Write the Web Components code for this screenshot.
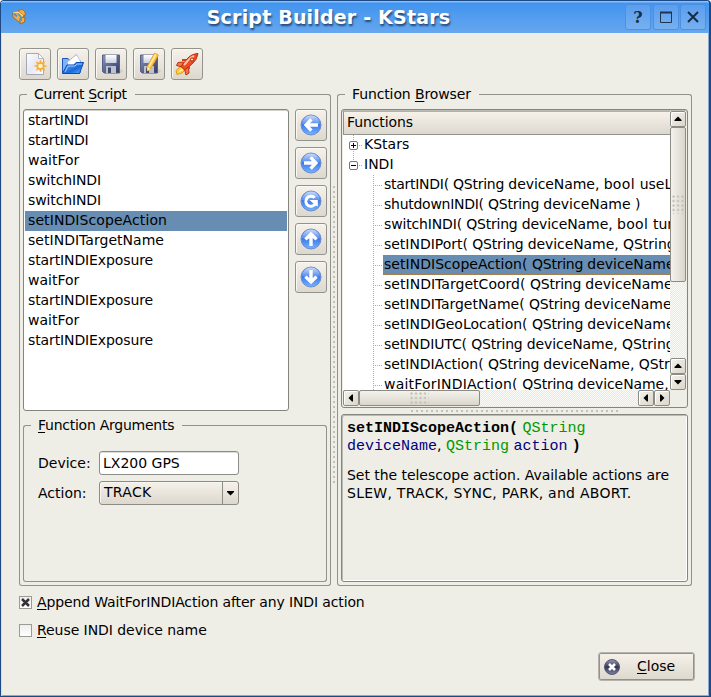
<!DOCTYPE html>
<html lang="en">
<head>
<meta charset="utf-8">
<title>Script Builder - KStars</title>
<style>
html,body{margin:0;width:711px;height:697px;overflow:hidden;background:#fff}
body{font:14px/20px "DejaVu Sans",sans-serif;color:#000}
u{text-decoration:underline;text-underline-offset:2px;text-decoration-thickness:1px}
.cols{display:flex;height:502px}
.tools{display:flex;gap:6px;padding:15px 0 0 17px;height:36px}
.left{margin-left:17px}
.top{display:flex;gap:6px;height:302px}
.arrows{display:flex;flex-direction:column;gap:6px}
.form{display:grid;grid-template-columns:61px 140px;row-gap:6px;padding:16px 0 0 14px;line-height:24px}
.checks{padding:6px 0 0 17px;height:60px}
.foot{display:flex;justify-content:flex-end;padding-right:14px}
</style>
</head>
<body>
<app-window caption="Script Builder - KStars">
  <div class="tools">
    <icon-button icon="new"></icon-button><icon-button icon="open"></icon-button><icon-button icon="save"></icon-button><icon-button icon="saveas"></icon-button><icon-button icon="run"></icon-button>
  </div>
  <div class="cols">
    <group-box class="left" style="width:312px;height:502px;--pad:3px;--top:5px"><span slot="legend" style="letter-spacing:-.35px">Current <u>S</u>cript</span>
      <div class="top">
        <script-list items="startINDI,startINDI,waitFor,switchINDI,switchINDI,setINDIScopeAction,setINDITargetName,startINDIExposure,waitFor,startINDIExposure,waitFor,startINDIExposure" selected="5"></script-list>
        <div class="arrows">
          <icon-button icon="left"></icon-button><icon-button icon="right"></icon-button><icon-button icon="copy"></icon-button><icon-button icon="up"></icon-button><icon-button icon="down"></icon-button>
        </div>
      </div>
      <group-box style="width:304px;height:167px;margin-top:4px;--pad:0px;--top:0px"><span slot="legend" style="letter-spacing:-.25px"><u>F</u>unction Arguments</span>
        <div class="form">
          <span>Device:</span><text-field value="LX200 GPS"></text-field>
          <span>Action:</span><combo-box value="TRACK"></combo-box>
        </div>
      </group-box>
    </group-box>
    <dot-splitter style="width:6px;padding:101px 0 0 1px;--h:300px;--w:5px"></dot-splitter>
    <group-box style="width:355px;height:502px;--pad:3px;--top:5px"><span slot="legend" style="letter-spacing:-.12px">Function <u>B</u>rowser</span>
      <function-tree></function-tree>
      <dot-splitter style="height:6px;padding:1px 0 0 69px;--h:5px;--w:210px"></dot-splitter>
      <doc-view></doc-view>
    </group-box>
  </div>
  <div class="checks">
    <check-box checked style="letter-spacing:-.13px"><u>A</u>ppend WaitForINDIAction after any INDI action</check-box>
    <check-box style="letter-spacing:-.06px"><u>R</u>euse INDI device name</check-box>
  </div>
  <div class="foot"><close-button><u>C</u>lose</close-button></div>
</app-window>
<script>
const define=(name,html)=>customElements.define(name,class extends HTMLElement{
  connectedCallback(){
    if(this.shadowRoot)return;
    const root=this.attachShadow({mode:"open"});
    root.innerHTML="<style>*{box-sizing:border-box}:host{box-sizing:border-box}</style>"+(typeof html==="function"?html(this):html);
  }
});
/* Spreads a run of text over a given width by adjusting its letter spacing. */
const pen=document.createElement("canvas").getContext("2d");
pen.font='14px "DejaVu Sans"';
const fit=(t,w)=>w?`<span style="letter-spacing:${((w-pen.measureText(t).width)/t.length).toFixed(3)}px">${t}</span>`:t;
const FACE="linear-gradient(#f6f2ea,#dcd8ce)";
const svg=(body,s=24)=>`<svg width="${s}" height="${s}" viewBox="0 0 24 24">${body}</svg>`;
const ball=p=>`<defs><linearGradient id="b" x2="0" y2="1"><stop stop-color="#5c92ee"/><stop offset=".4" stop-color="#2f70ea"/><stop offset="1" stop-color="#78b4ff"/></linearGradient><linearGradient id="h" x2="0" y2="1"><stop stop-color="#fff" stop-opacity=".65"/><stop offset="1" stop-color="#fff" stop-opacity=".15"/></linearGradient></defs><circle cx="12" cy="12" r="10" fill="url(#b)" stroke="#6c8cc8"/><path d="M3 11a9 8.500 0 0 1 18 0Q12 13.500 3 11Z" fill="url(#h)"/>${p}`;
const arrow=r=>ball(`<path transform="rotate(${r} 12 12)" d="M4.800 12L11.200 5.300L13.600 7.500L11 10.300H19V13.700H11L13.600 16.500L11.200 18.700Z" fill="#fff"/>`);
const disk=`<defs><linearGradient id="d" x2="1" y2="1"><stop stop-color="#8993bc"/><stop offset="1" stop-color="#313960"/></linearGradient><linearGradient id="l" x2="0" y2="1"><stop stop-color="#fff"/><stop offset="1" stop-color="#c8d0e0"/></linearGradient></defs><ellipse cx="15" cy="19" rx="9" ry="3" fill="#000" opacity=".08"/><path d="M3.500 3h17v18H5l-1.500-1.500Z" fill="url(#d)" stroke="#566088"/><path d="M6.500 3h11v8h-11Z" fill="url(#l)"/><path d="M7 14h10v7H7Z" fill="#bcc1cf"/><path d="M9 15.500h3V21H9Z" fill="#414969"/>`;
const ICONS={
 new:`<defs><linearGradient id="p" x2="1" y2="1"><stop stop-color="#fff"/><stop offset=".5" stop-color="#e6e8f4"/><stop offset="1" stop-color="#fff"/></linearGradient></defs><path d="M3.500 1.500h12l5 5v16h-17Z" fill="url(#p)" stroke="#a4a6ba"/><path d="M15.500 1.500v5h5Z" fill="#fff" stroke="#b5b7c5"/><path d="M17.500 8l1.300 3 3-1.300-1.300 3 3 1.300-3 1.300 1.300 3-3-1.300-1.300 3-1.300-3-3 1.300 1.300-3-3-1.300 3-1.300-1.300-3 3 1.300Z" fill="#f6a832" stroke="#f6b452" stroke-width=".7"/><circle cx="17.500" cy="14" r="2.300" fill="#fff6c8"/>`,
 open:`<defs><linearGradient id="f" x2="1" y2="1"><stop stop-color="#72b4ff"/><stop offset=".6" stop-color="#1769dd"/><stop offset="1" stop-color="#65b4ff"/></linearGradient></defs><path d="M1.500 21V6.500H7L9 8.500H19V21Z" fill="#7ab5fa" stroke="#1c55b6"/><path d="M6 10L15.500 2.500L20.500 12L9 19Z" fill="#f3f5ff" stroke="#9ea6c8" stroke-width=".8"/><path d="M12 6L16 4L20.500 12H8Z" fill="#fff"/><path d="M1.500 21.500L6 13H13L15 10.500H22.500L18.500 21.500Z" fill="url(#f)" stroke="#0b49b7"/><path d="M4 20L7 14H14L16 12H21" fill="none" stroke="#9acaff"/>`,
 save:disk,
 saveas:disk+`<path d="M17.500 1L21.500 3L13.500 17L10.500 19L10 15Z" fill="#ffc642" stroke="#e79b24" stroke-width=".8"/><path d="M18.700 2.500L12 14.500" stroke="#fff1ae" stroke-width="1.500"/><path d="M10 15l3.500 2L10.500 19Z" fill="#ffe8bc"/>`,
 run:`<path d="M6 14L1 18.500L2 22.500L7 21L10 18Z" fill="#ffcf39" stroke="#e79820"/><path d="M7 16L3 20.500L8 18Z" fill="#fff7b0"/><path d="M8.500 10L3 10.500L1.500 13.500L7 15ZM13.500 15L14 21L11 23L9.500 17Z" fill="#f07a43" stroke="#b92e12"/><path d="M23 1.500Q16 2 12 7L6 14.500L9.500 18L16.500 12.500Q22 8 23 1.500Z" fill="#ef4c23" stroke="#b52b10"/><path d="M19 4Q15.500 5 12.500 9L9 13" stroke="#ffc4a2" stroke-width="2" fill="none"/><circle cx="17" cy="7.500" r="1.600" fill="#ffe1cb" stroke="#a92b11"/><path d="M7 8h4M14 17v-3" stroke="#d63d1b" stroke-width="1.800"/>`,
 left:arrow(0),right:arrow(180),up:arrow(90),down:arrow(-90),
 copy:ball(`<path d="M15.700 8.800A5.100 5.100 0 1 0 16.500 14.500" fill="none" stroke="#fff" stroke-width="3"/><path d="M10.500 11H18.800V17.500L16 16Z" fill="#fff"/>`)
};
define("icon-button",e=>`<style>:host{display:flex;align-items:center;justify-content:center;width:32px;height:32px;flex:none;border:1px solid #93938d;border-radius:3px;background:${FACE};box-shadow:inset 1px 1px #faf8f2}svg{display:block}</style>${svg(ICONS[e.getAttribute("icon")])}`);
define("app-window",e=>`<style>
:host{display:block;width:711px;height:697px;border:1px solid #1d4a85;border-right-width:2px;border-radius:4px 4px 0 0;background:#eeeee6;box-shadow:inset 1px 0 #d2e0f4,inset -1px -1px #8baad0}
header{display:flex;height:32px;padding:3px 3px 0 9px;background:linear-gradient(#86bdfa 0,#86bdfa 1px,#4194ee 2px,#66a7ef);border-radius:3px 3px 0 0}
h1{flex:1;margin:0 0 0 2px;text-align:center;font:bold 19px/27px "DejaVu Sans",sans-serif;color:#fff;text-shadow:1px 2px 2px #234875;letter-spacing:.19px}
.w{display:flex;gap:2px}.w span{width:26px;height:26px;border:1px solid #4c90e2;border-radius:3px;background:linear-gradient(#5b9eef,#76b0f0)}
svg{display:block}main{padding-left:1px}
</style><header><svg width="20" height="26" viewBox="0 0 20 26"><g fill="#f2b13c" stroke="#a85a17" stroke-width=".8"><path d="M2.500 9L8 7L14 11L12 19L9 18L3 13Z"/><path d="M8 7Q14 3 15.500 10L14 12ZM10 14L15 13L14.500 18L10 20Z"/></g><path d="M4 9.500l3 3M8 9l3 4M11 14v3" stroke="#578fc8" stroke-width="1.800"/><path d="M3.500 8.500L8 8l5 4" fill="none" stroke="#ffe18f" stroke-width="1.200"/></svg><h1>${e.getAttribute("caption")}</h1>
<div class="w"><span style="font:bold 16px/25px 'DejaVu Serif',serif;color:#172c44;text-align:center">?</span>
<span style="margin-right:-1px"><svg width="24" height="24"><path d="M6.500 7.500h11v10h-11Z" fill="none" stroke="#21344b"/><path d="M6 7.500h12" stroke="#21344b" stroke-width="2"/></svg></span>
<span><svg width="24" height="24"><path d="M7 7L17 17M17 7L7 17" stroke="#172c44" stroke-width="2"/></svg></span></div></header><main><slot></slot></main>`);
define("group-box",`<style>
:host{display:flex;flex-direction:column;flex:none}
.t{display:flex;height:20px;align-items:center;flex:none}
.t i{height:10px;align-self:flex-end;border-top:1px solid #92928c}
.a{width:8px;border-left:1px solid #92928c;border-radius:3px 0 0 0}
.z{flex:1;border-right:1px solid #92928c;border-radius:0 3px 0 0}
.n{margin:0 8px 0 7px;white-space:pre}
.b{flex:1;min-height:0;border:1px solid #92928c;border-top:0;border-radius:0 0 3px 3px;padding:var(--top) var(--pad) 0}
</style><div class="t"><i class="a"></i><span class="n"><slot name="legend"></slot></span><i class="z"></i></div><div class="b"><slot></slot></div>`);
const LIST_WIDTH={startINDI:60.5,switchINDI:73,setINDIScopeAction:139,setINDITargetName:136,startINDIExposure:125};
define("script-list",e=>`<style>:host{display:block;width:266px;height:302px;border:1px solid #858580;border-radius:3px;background:#fff;padding:1px 1px;box-shadow:inset 0 1px #d2d2cc}
div{height:20px;line-height:19px;padding-left:3px;white-space:pre}.s{background:#678db2}</style>${e.getAttribute("items").split(",").map((t,i)=>`<div class="${i==e.getAttribute("selected")?"s":""}">${fit(t,LIST_WIDTH[t])}</div>`).join("")}`);
define("text-field",e=>`<style>:host{display:block;height:24px;border:1px solid #8c8c86;border-radius:3px;background:#fff;padding-left:3px;line-height:23px;box-shadow:inset 0 1px #ddd}</style>${e.getAttribute("value")}`);
define("combo-box",e=>`<style>:host{display:flex;height:24px;border:1px solid #8c8c86;border-radius:3px;background:${FACE};line-height:21px;box-shadow:inset 1px 1px #f8f6f0}span{flex:1;padding-left:4px;letter-spacing:.3px}i{width:16px;border-left:1px solid #8c8c86}svg{display:block}</style><span>${e.getAttribute("value")}</span><i><svg width="15" height="22"><path d="M4 9h7v1L7.500 13.500L4 10Z"/></svg></i>`);
define("dot-splitter",`<style>:host{display:block;flex:none}div{width:var(--w);height:var(--h);background:radial-gradient(circle at 2px 2px,#c0c0b8 1px,#fff0 1.500px) 0 0/5px 5px}</style><div></div>`);
define("scroll-button",e=>`<style>:host{display:block;width:16px;height:16px;flex:none;border:1px solid #8c8c86;border-radius:2px;background:linear-gradient(135deg,#f4f2ec,#dad6cc);box-shadow:inset 1px 1px #fff}svg{display:block}</style><svg width="14" height="14"><path transform="rotate(${e.getAttribute("dir")} 7 7)" d="M3.500 9h7v-1L7 4.500L3.500 8Z"/></svg>`);
define("scroll-thumb",`<style>:host{display:flex;align-items:center;justify-content:center;flex:none;border:1px solid #8c8c86;border-radius:2px;background:linear-gradient(var(--dir),#f4f2ec,#dad6cc)}div{background:radial-gradient(circle at 1.500px 1.500px,#c4c2b8 1px,#fff0 1.400px) 0 0/4.500px 4.500px;width:var(--gw);height:var(--gh)}</style><div></div>`);
const Q=["QString ",55.3],D=["deviceName, ",95.3];
const FN=[
 [["startINDI( ",69],Q,D,["bool ",36],["useL"]],
 [["shutdownINDI( ",104],Q,["deviceName ",91.7],[")"]],
 [["switchINDI( ",82.3],Q,D,["bool ",36],["turn"]],
 [["setINDIPort( ",88.3],Q,D,["QString"]],
 [["setINDIScopeAction( ",148],Q,["deviceName"]],
 [["setINDITargetCoord( ",146],Q,["deviceName"]],
 [["setINDITargetName( ",145],Q,["deviceName"]],
 [["setINDIGeoLocation( ",148],Q,["deviceName"]],
 [["setINDIUTC( ",87.3],Q,D,["QString"]],
 [["setINDIAction( ",104],Q,D,["QStr"]],
 [["waitForINDIAction( ",138.3],Q,D,["Q"]]
];
const node=plus=>`<svg width="21" height="20"><g fill="none" stroke="#aaa" stroke-dasharray="1 1"><path d="M10.500 0v5${plus?"M10.500 16v4":""}M16 10.500h4"/></g><rect x="6.500" y="6.500" width="8" height="8" rx="1.500" fill="#fff" stroke="#777"/><path d="M8 10.500h5${plus?"M10.500 8v5":""}" stroke="#000"/></svg>`;
define("function-tree",`<style>
:host{display:grid;grid-template:279px 16px/327px 16px;width:347px;height:299px;border:1px solid #858580;border-radius:3px;padding:1px;background:#eeeee6;box-shadow:inset 0 1px #bcbcb6}
.v{background:#fff;overflow:hidden}
h2{margin:0;height:24px;font:inherit;line-height:20px;padding-left:3px;background:${FACE};border:1px solid #92928c;border-top-color:#b0b0a8;border-right:0;letter-spacing:-.1px}
.r{display:flex;height:20px;line-height:18px;white-space:pre}
.r svg{flex:none}
.c{height:20px;line-height:19px;flex:1;padding-left:1px}
.s{background:#678db2;outline:1px dotted #a57e50;outline-offset:-1px}
.sb{display:flex;background:repeating-conic-gradient(#fafaf6 0 25%,#e9e9e2 0 50%) 0 0/2px 2px}
</style>
<div class="v"><h2>Functions</h2>
<div class="r">${node(true)}KStars</div>
<div class="r">${node(false)}INDI</div>
${FN.map((t,i)=>`<div class="r"><svg width="40" height="20"><path d="M30.500 0v20M32 10.500h7" fill="none" stroke="#aaa" stroke-dasharray="1 1"/></svg><div class="c ${i==4?"s":""}">${t.map(p=>fit(...p)).join("")}</div></div>`).join("")}</div>
<div class="sb" style="flex-direction:column"><scroll-button dir="0"></scroll-button><scroll-thumb style="height:155px;--dir:90deg;--gw:12px;--gh:19px"></scroll-thumb><span style="flex:1"></span><scroll-button dir="0"></scroll-button><scroll-button dir="180"></scroll-button></div>
<div class="sb"><scroll-button dir="-90"></scroll-button><scroll-thumb style="width:121px;--dir:180deg;--gw:19px;--gh:12px"></scroll-thumb><span style="flex:1"></span><scroll-button dir="-90"></scroll-button><scroll-button dir="90"></scroll-button></div>`);
define("doc-view",`<style>
:host{display:block;width:347px;height:168px;border:1px solid #858580;border-radius:3px;padding:3px 5px;box-shadow:inset 1px 1px #bcbcb6,inset -1px -1px #fff;line-height:18px}
p{margin:0 0 12px;white-space:pre}code,b{font:15px/1 "Liberation Mono",monospace}b{font-weight:bold}.g{color:#009900}.n{color:#00007f}
</style><p><b>setINDIScopeAction(</b> <code class="g">QString</code>
<code class="n">deviceName</code>, <code class="g">QString</code> <code class="n">action</code> <b>)</b></p><p>${fit("Set the telescope action. Available actions are",322)}
${fit("SLEW, TRACK, SYNC, PARK, and ABORT.",284.5)}</p>`);
define("check-box",e=>`<style>:host{display:flex;height:28px;line-height:20px}svg{flex:none;margin:4px 5px 0 0}span{white-space:pre}</style><svg width="13" height="13"><defs><linearGradient id="g" x2="0" y2="1"><stop stop-color="#eee"/><stop offset="1" stop-color="#fff"/></linearGradient></defs><rect x=".5" y=".5" width="12" height="12" fill="url(#g)" stroke="#9b9b96"/>${e.hasAttribute("checked")?'<path d="M3 3L10 10M10 3L3 10" stroke="#333" stroke-width="2.500"/>':""}</svg><span><slot></slot></span>`);
define("close-button",`<style>:host{display:flex;width:97px;height:29px;border:1px solid #b5b4ac;border-radius:3px;background:${FACE};box-shadow:inset 0 0 0 1px #92928c;padding:0 0 0 4px;line-height:27px}svg{margin:5px 16px 0 0}</style><svg width="18" height="18" viewBox="0 0 18 18"><defs><linearGradient id="g" x2="0" y2="1"><stop stop-color="#9a9cb4"/><stop offset=".5" stop-color="#343857"/><stop offset="1" stop-color="#7e83a8"/></linearGradient></defs><circle cx="9" cy="9" r="7.500" fill="url(#g)" stroke="#555873"/><path d="M6 6L12 12M12 6L6 12" stroke="#fff" stroke-width="2.600"/></svg><span><slot></slot></span>`);
</script>
</body>
</html>
